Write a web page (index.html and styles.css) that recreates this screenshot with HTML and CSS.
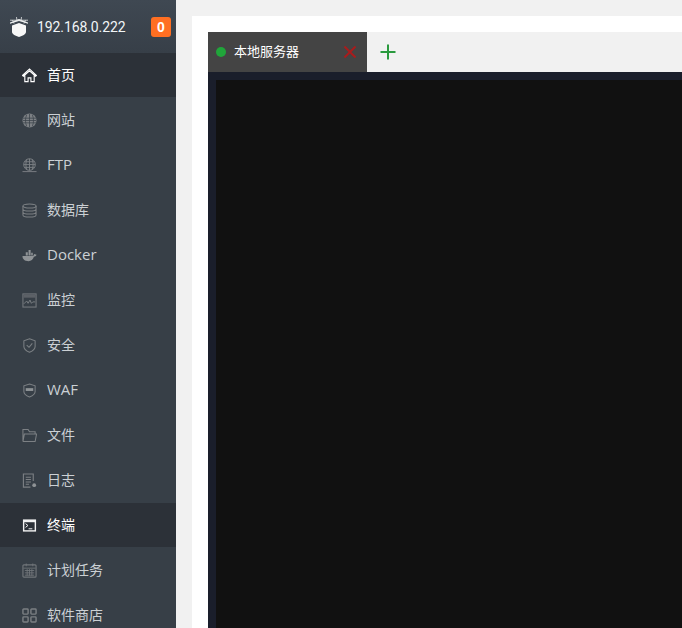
FILE: index.html
```html
<!DOCTYPE html>
<html lang="zh-CN">
<head>
<meta charset="utf-8">
<title>终端</title>
<link rel="stylesheet" href="styles.css">
</head>
<body>
<div class="app">
  <aside class="sidebar">
    <div class="brand">
      <svg class="logo" viewBox="0 0 18 20"><path d="M0 5.500 9 2l9 3.500v1.200L9 4 0 6.700z" fill="#eef0f0"/><path d="M2.500 3 4 6.500M6.500 0 7 4M11.500 0 11 4M15.500 3 14 6.500M0 3.200h18" stroke="#dfe2e3" stroke-width=".8"/><path d="M2 8.500 9 6l7 2.500V15c0 2.200-3.500 4-7 5-3.500-1-7-2.800-7-5z" fill="#f7f7f7"/></svg>
      <span class="ip">192.168.0.222</span>
      <span class="badge">0</span>
    </div>
    <nav class="menu">
      <a class="item active"><svg class="icon" viewBox="0 0 16 16"><path d="M.5 8 8 1l7.500 7-1 .8L8 2.900 1.500 8.800zM3 8v6.500H6.500V10.500H9.500V14.500H13V8" fill="none" stroke="#fff" stroke-width="1.200"/></svg><span>首页</span></a>
      <a class="item"><svg class="icon" viewBox="0 0 16 16"><circle cx="8" cy="8" r="7.500" fill="#7c8084"/><path d="M1 5.500h14M1 8h14M1 10.500h14M8 1v14M5 1.800c-1.700 3.800-1.700 8.600 0 12.400M11 1.800c1.700 3.800 1.700 8.600 0 12.400" fill="none" stroke="#3a4149" stroke-width=".8"/></svg><span>网站</span></a>
      <a class="item"><svg class="icon" viewBox="0 0 16 16"><g fill="none" stroke="#7c8084" stroke-width="1"><circle cx="8" cy="7" r="6.200"/><path d="M8 .8v12.400M1.800 7h12.400M2.800 4h10.400M2.800 10h10.400M5.300 1.500c-1.600 3.500-1.600 7.500 0 11M10.700 1.500c1.600 3.500 1.600 7.500 0 11M.5 14.500h15"/></g></svg><span class="latin">FTP</span></a>
      <a class="item"><svg class="icon" viewBox="0 0 16 16"><g fill="none" stroke="#7c8084" stroke-width="1.100"><ellipse cx="8" cy="3.200" rx="7" ry="2.200"/><path d="M1 3.200v9.600c0 1.200 3.100 2.200 7 2.200s7-1 7-2.200V3.200M1 6.400c0 1.200 3.100 2.200 7 2.200s7-1 7-2.200M1 9.600c0 1.200 3.100 2.200 7 2.200s7-1 7-2.200"/></g></svg><span>数据库</span></a>
      <a class="item"><svg class="icon" viewBox="0 0 16 16"><path d="M.5 8.500h11.500l1-2.200 2.500.9c-.5 1.500-1.700 2-2.800 2.200-.8 2.900-3 4.600-5.700 4.600-4 0-6.500-2-6.500-5.500z" fill="#8f9396"/><path d="M4 4.500h2.200v3.500H4zM7 2h2.200v6H7zM9.800 5h1.700v3H9.800z" fill="#8f9396"/></svg><span class="latin">Docker</span></a>
      <a class="item"><svg class="icon" viewBox="0 0 16 16"><rect x="1" y="1" width="14" height="14" fill="none" stroke="#72777b" stroke-width="1.200"/><path d="M1.500 1.500h13v3.500h-13z" fill="#5c6167"/><path d="M2 11.500 5 8.500 6.500 11 8.500 7.500 10 11 11.500 9.500H14" fill="none" stroke="#7c8084" stroke-width="1"/></svg><span>监控</span></a>
      <a class="item"><svg class="icon" viewBox="0 0 16 16"><path d="M8 .8 14 3v6c0 3-3.200 5-6 6.200C5.200 14 2 12 2 9V3z" fill="none" stroke="#7c8084" stroke-width="1.100"/><path d="M5 7.700 7.500 10 11 5.800" fill="none" stroke="#7c8084" stroke-width="1.100"/></svg><span>安全</span></a>
      <a class="item"><svg class="icon" viewBox="0 0 16 16"><path d="M8 1 14 3v6c0 3-3.200 4.800-6 6C5.200 13.800 2 12 2 9V3z" fill="none" stroke="#7c8084" stroke-width="1.100"/><path d="M4 5.500h8v3H4z" fill="#8f9396"/></svg><span class="latin">WAF</span></a>
      <a class="item"><svg class="icon" viewBox="0 0 16 16"><path d="M1 14.500V1.500H6.500L8 4H14V6.500M1 14.500H14L15.500 6.500H2.500L1 14.500" fill="none" stroke="#7c8084" stroke-width="1.100"/></svg><span>文件</span></a>
      <a class="item"><svg class="icon" viewBox="0 0 16 16"><path d="M12 8.500V1H1.500V15H9" fill="none" stroke="#7c8084" stroke-width="1.200"/><path d="M4 4.500h5.500M4 7h5.500M4 9.500h5.500M4 12h3.500" stroke="#7c8084" stroke-width="1.100"/><circle cx="13" cy="13" r="2" fill="#8f9396"/></svg><span>日志</span></a>
      <a class="item active"><svg class="icon" viewBox="0 0 16 16"><rect x="1" y="1.500" width="14" height="13" fill="#f2f2f2"/><rect x="2.500" y="4.500" width="11" height="8.500" fill="#2b3037"/><path d="M3.800 6 6.300 8 3.800 10M7 11.500H11" fill="none" stroke="#fff" stroke-width="1"/></svg><span>终端</span></a>
      <a class="item"><svg class="icon" viewBox="0 0 16 16"><rect x="1" y="2" width="14" height="13" rx="1" fill="none" stroke="#72777b" stroke-width="1.200"/><path d="M4.500 .5v3M11.500 .5v3M1.500 5.500h13M3 8h10M3 10.500h10M3 13h10M5.500 6.500v7M8 6.500v7M10.500 6.500v7" stroke="#72777b" stroke-width=".9"/></svg><span>计划任务</span></a>
      <a class="item"><svg class="icon" viewBox="0 0 16 16"><g fill="none" stroke="#7c8084" stroke-width="1.500"><rect x="1" y="1" width="5.500" height="5.500" rx=".8"/><rect x="9.500" y="1" width="5.500" height="5.500" rx=".8"/><rect x="1" y="9.500" width="5.500" height="5.500" rx=".8"/><rect x="9.500" y="9.500" width="5.500" height="5.500" rx=".8"/></g></svg><span>软件商店</span></a>
    </nav>
  </aside>
  <main class="content">
    <section class="card">
      <div class="tabs">
        <div class="tab">
          <span class="dot"></span>
          <span class="tab-name">本地服务器</span>
          <svg class="close" viewBox="0 0 12 12"><path d="M.5.500 11.500 11.500M11.500.500.500 11.500" stroke="#a81c1c" stroke-width="2"/></svg>
        </div>
        <svg class="add" viewBox="0 0 16 16"><path d="M8 .5v15M.5 8h15" stroke="#2a9a3e" stroke-width="2"/></svg>
      </div>
      <div class="terminal"><div class="screen"></div></div>
    </section>
  </main>
</div>
</body>
</html>
```

FILE: styles.css
```css
html, body {
  margin: 0;
  height: 100%;
  overflow: hidden;
}
body {
  background: #f1f1f1;
  font-family: "Open Sans", "Noto Sans CJK SC", sans-serif;
}
.app {
  display: flex;
  height: 628px;
}
.sidebar {
  width: 176px;
  flex: none;
  background: #373f47;
  overflow: hidden;
}
.brand {
  height: 53px;
  display: flex;
  align-items: center;
  padding-left: 10px;
  padding-right: 5px;
  box-sizing: border-box;
  background: linear-gradient(180deg, #3f4852, #373f48);
}
.logo {
  width: 18px;
  height: 20px;
  flex: none;
}
.ip {
  margin-left: 9px;
  font-family: "Roboto", "Liberation Sans", sans-serif;
  font-size: 14px;
  letter-spacing: -0.1px;
  color: #f1f5f7;
  flex: 1;
}
.badge {
  width: 20px;
  height: 20px;
  border-radius: 3px;
  background: #ff6f22;
  color: #fff;
  font: bold 14px/20px "Liberation Sans", sans-serif;
  text-align: center;
}
.menu {
  display: flex;
  flex-direction: column;
  gap: 1px;
}
.item {
  height: 44px;
  display: flex;
  align-items: center;
  padding-left: 22px;
  gap: 10px;
  font-size: 14px;
  line-height: 20px;
  color: #cbd0d4;
}
.item.active {
  background: #2c3138;
  color: #fff;
}
.icon {
  width: 15px;
  height: 15px;
  flex: none;
}
.latin {
  font-size: 15px;
  margin-bottom: 2px;
}
.content {
  flex: 1;
  padding: 16px 0 0 16px;
  min-width: 0;
}
.card {
  background: #fff;
  height: 100%;
  padding: 16px 0 0 16px;
  box-sizing: border-box;
}
.tabs {
  height: 40px;
  display: flex;
  align-items: center;
  background: #f1f1f1;
}
.tab {
  width: 159px;
  height: 40px;
  background: #444444;
  display: flex;
  align-items: center;
  padding: 0 11px 0 8px;
  box-sizing: border-box;
}
.dot {
  width: 10px;
  height: 10px;
  border-radius: 50%;
  background: #20a53a;
}
.tab-name {
  margin: 0 0 2px 8px;
  font-size: 13px;
  line-height: 18px;
  color: #fff;
}
.close {
  width: 12px;
  height: 12px;
  margin-left: auto;
}
.add {
  width: 16px;
  height: 16px;
  margin-left: 13px;
}
.terminal {
  background: #1a1e2b;
  padding: 8px 0 0 8px;
  height: 556px;
  box-sizing: border-box;
}
.screen {
  background: #111111;
  height: 100%;
}
```
